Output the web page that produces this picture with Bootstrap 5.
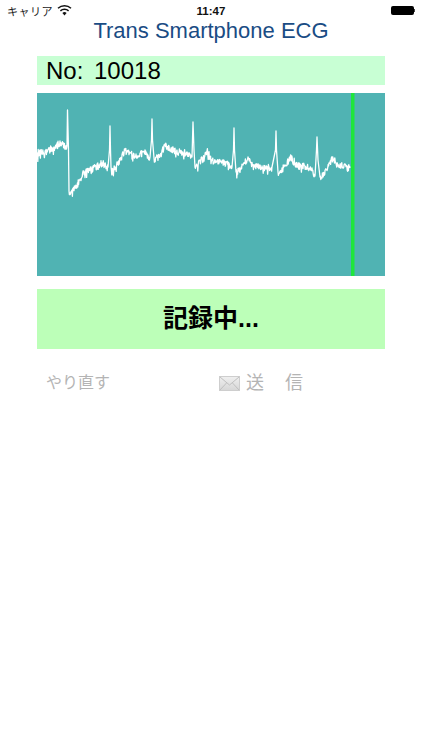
<!DOCTYPE html>
<html lang="ja">
<head>
<meta charset="utf-8">
<title>Trans Smartphone ECG</title>
<link href="https://cdn.jsdelivr.net/npm/bootstrap@5.3.0/dist/css/bootstrap.min.css" rel="stylesheet">
<style>
html,body{background:#fff;height:100%;}
body{font-family:"Liberation Sans","Noto Sans CJK JP",sans-serif;color:#000;overflow:hidden;}
.status-strip{height:21px;padding:0 7px;font-size:11px;line-height:21px;color:#222;}
.status-side{flex:1 1 0;}
.status-carrier{font-size:11px;letter-spacing:.5px;color:#222;padding-top:3px;}
.status-time{font-size:11.5px;font-weight:700;color:#111;padding-top:1px;}
.batt-body{width:23px;height:9px;background:#000;border-radius:2px;}
.batt-tip{width:1.5px;height:3px;background:#444;}
.app-title{font-size:22px;line-height:20px;height:20px;color:#1a4c84;margin:0;font-weight:400;}
.main-col{margin:15px 37px 0;}
.id-bar{height:29px;background:#c8ffd4;font-size:24px;line-height:29px;padding-left:9px;word-spacing:4px;}
.ecg-box{display:block;width:348px;height:183px;margin-top:8px;background:#50b3b3;}
.rec-button{height:60px;margin-top:13px;background:#bcffb8;font-size:25px;font-weight:700;}
.action-row{margin-top:22px;height:24px;color:#b4b4b4;}
.redo-cell{width:182px;padding-left:9px;font-size:16px;}
.send-cell{font-size:18px;letter-spacing:0;}
.send-word{margin-left:6px;}
.gap-char{margin-left:21px;}
</style>
</head>
<body>
<div class="status-strip d-flex align-items-center">
  <div class="status-side d-flex align-items-center gap-1">
    <span class="status-carrier">キャリア</span>
    <svg width="15" height="11" viewBox="0 0 15 11" aria-hidden="true">
      <path d="M7.5 10.5 5.4 8a3 3 0 0 1 4.2 0z" fill="#111"/>
      <path d="M3.4 5.9a6 6 0 0 1 8.2 0" fill="none" stroke="#111" stroke-width="1.5"/>
      <path d="M1 3.3a9.6 9.6 0 0 1 13 0" fill="none" stroke="#111" stroke-width="1.5"/>
    </svg>
  </div>
  <span class="status-time">11:47</span>
  <div class="status-side d-flex align-items-center justify-content-end">
    <span class="batt-body"></span><span class="batt-tip"></span>
  </div>
</div>
<h1 class="app-title text-center">Trans Smartphone ECG</h1>
<div class="main-col">
  <div class="id-bar">No: 10018</div>
  <svg class="ecg-box" viewBox="37 93 348 183" role="img" aria-label="ECG">
    <polyline id="wave" fill="none" stroke="#fff" stroke-width="1.3" stroke-linejoin="round" points=""/>
    <rect x="351" y="93" width="3.5" height="183" fill="#1ee63c"/>
  </svg>
  <div class="rec-button d-flex align-items-center justify-content-center">記録中...</div>
  <div class="action-row d-flex align-items-center">
    <div class="redo-cell">やり直す</div>
    <div class="send-cell d-flex align-items-center">
      <svg width="21" height="15" viewBox="0 0 21 15" aria-hidden="true">
        <defs><linearGradient id="env" x1="0" y1="0" x2="0" y2="1"><stop offset="0" stop-color="#f0f0f0"/><stop offset="1" stop-color="#d6d6d6"/></linearGradient></defs>
        <rect x=".5" y=".5" width="20" height="14" fill="url(#env)" stroke="#cecece"/>
        <path d="M1 1l9.500 8L20 1M1 14l6.500-7M20 14l-6.500-7" fill="none" stroke="#c0c0c0"/>
      </svg>
      <span class="send-word">送</span><span class="gap-char">信</span>
    </div>
  </div>
</div>
<script>
var anchors=[[37,155],[40,150],[47,150],[54,147],[60,141],[62,144],[67,146],[67.5,110],[68.5,150],[69,191],[72,190],[75,188],[79,180],[83,171],[88,170],[95,166],[102,163],[108,167],[109.5,150],[110,126],[110.5,150],[111,167],[113,169],[118,162],[122,155],[125,149],[130,153],[136,154],[143,152],[150,157],[151.5,140],[152,119],[152.5,140],[154,158],[160,155],[165,144],[171,148],[177,150],[187,152],[192,157],[193,122],[194,150],[195,167],[200,160],[207,151],[212,160],[220,160],[228,162],[232,167],[233.5,150],[234,128],[234.5,150],[236,172],[243,165],[248,157],[253,165],[262,166],[272,167],[275.5,150],[276,131],[276.5,150],[278,172],[285,165],[291,156],[295,163],[304,165],[312,168],[315,176],[316.5,150],[317,137],[318,160],[320,177],[325,170],[332,158],[337,163],[344,165],[350,168]];
var seed=12345;
function rnd(){seed=(seed*16807)%2147483647;return seed/2147483647;}
var pts=[];
for(var i=0;i<anchors.length-1;i++){
  var a=anchors[i],b=anchors[i+1],dx=b[0]-a[0];
  var steep=Math.abs(b[1]-a[1])/dx>4;
  pts.push(a[0]+","+a[1]);
  if(steep)continue;
  for(var x=a[0]+.4;x<b[0]-.2;x+=.4){
    var y=a[1]+(b[1]-a[1])*(x-a[0])/dx;
    var n=(rnd()-.3)*(rnd()<.2?12:6.5);
    pts.push(x.toFixed(1)+","+(y+n).toFixed(1));
  }
}
pts.push("350,168");
document.getElementById("wave").setAttribute("points",pts.join(" "));
</script>
<script src="https://cdn.jsdelivr.net/npm/bootstrap@5.3.0/dist/js/bootstrap.bundle.min.js"></script>
</body>
</html>
